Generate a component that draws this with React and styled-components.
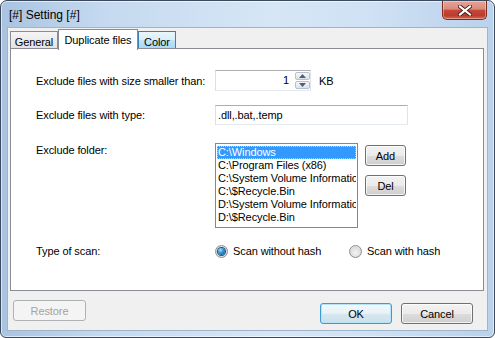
import React from "react";
import styled, { createGlobalStyle, css } from "styled-components";

const GlobalStyle = createGlobalStyle`
  html, body {
    margin: 0;
    padding: 0;
  }
  body {
    width: 495px;
    height: 338px;
    overflow: hidden;
    background: #fff;
    font-family: "Segoe UI", "Liberation Sans", Arial, sans-serif;
    font-size: 11px;
    letter-spacing: -0.1px;
    color: #000;
  }
`;

const Window = styled.div`
  box-sizing: border-box;
  width: 495px;
  height: 338px;
  display: flex;
  flex-direction: column;
  border: 1px solid #3b4a5c;
  border-radius: 7px 7px 6px 6px;
  overflow: hidden;
  background: linear-gradient(
    90deg,
    #a9c3e0 0%,
    #c4d9ef 20%,
    #d6e6f6 55%,
    #cfe1f4 75%,
    #b9d1eb 100%
  );
  box-shadow: inset 0 0 0 1px rgba(255, 255, 255, 0.6);
`;

const TitleBar = styled.div`
  height: 27px;
  display: flex;
  justify-content: space-between;
  align-items: flex-start;
  padding-left: 8px;
`;

const Title = styled.div`
  font-size: 12px;
  letter-spacing: 0;
  line-height: 15px;
  margin-top: 7px;
  color: #000;
`;

const CloseButton = styled.div`
  box-sizing: border-box;
  width: 45px;
  height: 19px;
  margin-right: 7px;
  display: flex;
  align-items: center;
  justify-content: center;
  border: 1px solid #7d2a21;
  border-top: none;
  border-radius: 0 0 5px 5px;
  background: linear-gradient(
    #e6a698 0%,
    #d8897c 45%,
    #c5483b 52%,
    #bd3a2c 80%,
    #d4684f 100%
  );
  box-shadow: inset 0 0 0 1px rgba(255, 255, 255, 0.35);
`;

const Client = styled.div`
  flex: 1;
  margin: 0 7px 7px 7px;
  padding: 1px 3px 0 2px;
  display: flex;
  flex-direction: column;
  background: #f0f0f0;
  box-shadow: 0 0 0 1px #9fb3c9;
`;

const TabBar = styled.div`
  height: 21px;
  display: flex;
  align-items: flex-end;
  position: relative;
  z-index: 1;
  margin-bottom: -2px;
`;

const Tab = styled.div`
  box-sizing: border-box;
  width: ${(p) => p.$w}px;
  height: 17px;
  margin-bottom: 2px;
  display: flex;
  justify-content: center;
  padding-top: 3px;
  line-height: 14px;
  border: 1px solid #898c95;
  border-bottom: none;
  background: linear-gradient(#f5f5f5, #e3e3e3);
  ${(p) =>
    p.$hover &&
    css`
      border-color: #3c7fb1;
      background: linear-gradient(#e9f5fc 0%, #d9eefb 50%, #bfe4f9 51%, #a9d8f5 100%);
    `}
  ${(p) =>
    p.$active &&
    css`
      height: 21px;
      margin-bottom: 0;
      padding-top: 3px;
      background: #fff;
    `}
`;

const Panel = styled.div`
  box-sizing: border-box;
  height: 243px;
  border: 1px solid #898c95;
  background: #fff;
  padding-left: 25px;
  display: flex;
  flex-direction: column;
`;

const Row = styled.div`
  display: flex;
  align-items: ${(p) => (p.$top ? "flex-start" : "center")};
  margin-top: ${(p) => p.$mt}px;
  min-height: ${(p) => p.$h || 14}px;
`;

const Label = styled.div`
  width: 179px;
  flex: none;
  line-height: 14px;
`;

const SpinBox = styled.div`
  box-sizing: border-box;
  width: 96px;
  height: 21px;
  display: flex;
  border: 1px solid #abadb3;
  border-color: #abadb3 #e2e3ea #e3e9ef #dbdfe6;
  background: #fff;
`;

const SpinValue = styled.div`
  flex: 1;
  text-align: right;
  padding-right: 6px;
  line-height: 19px;
`;

const SpinButtons = styled.div`
  width: 15px;
  display: flex;
  flex-direction: column;
  padding: 1px 0;
  gap: 1px;
`;

const SpinHalf = styled.div`
  flex: 1;
  display: flex;
  align-items: center;
  justify-content: center;
  border: 1px solid #b7c1ce;
  border-radius: 2px;
  background: linear-gradient(#f6f7f9, #dfe3e8);
`;

const Unit = styled.div`
  margin-left: 8px;
`;

const TextInput = styled.div`
  box-sizing: border-box;
  width: 193px;
  height: 20px;
  padding-left: 2px;
  line-height: 18px;
  border: 1px solid;
  border-color: #abadb3 #e2e3ea #e3e9ef #dbdfe6;
  background: #fff;
`;

const ListBox = styled.div`
  box-sizing: border-box;
  width: 143px;
  height: 85px;
  padding: 2px 1px 0 1px;
  border: 1px solid #828790;
  background: #fff;
  overflow: hidden;
`;

const ListItem = styled.div`
  box-sizing: border-box;
  height: 13px;
  line-height: 13px;
  padding-left: 1px;
  white-space: nowrap;
  overflow: hidden;
  ${(p) =>
    p.$selected &&
    css`
      background: #3399ff;
      color: #fff;
      outline: 1px dotted #a8d2ff;
      outline-offset: -1px;
    `}
`;

const SideButtons = styled.div`
  margin-left: 7px;
  padding-top: 2px;
  display: flex;
  flex-direction: column;
  gap: 9px;
`;

const Button = styled.div`
  box-sizing: border-box;
  width: ${(p) => p.$w}px;
  height: 21px;
  display: flex;
  align-items: center;
  justify-content: center;
  margin-top: ${(p) => p.$mt || 0}px;
  border: 1px solid #707070;
  border-radius: 3px;
  background: linear-gradient(#f2f2f2 0%, #ebebeb 50%, #dddddd 51%, #cfcfcf 100%);
  box-shadow: inset 0 0 0 1px rgba(255, 255, 255, 0.75);
  ${(p) =>
    p.$default &&
    css`
      border-color: #3c9bd0;
      box-shadow: inset 0 0 0 1px #b8e4f8;
      background: linear-gradient(#f3f9fc 0%, #e6f1f7 50%, #d6e7f0 51%, #cde0ea 100%);
    `}
  ${(p) =>
    p.$disabled &&
    css`
      border-color: #adb2b5;
      background: #f4f4f4;
      box-shadow: none;
      color: #a3a3a3;
    `}
`;

const RadioGroup = styled.div`
  display: flex;
  align-items: center;
  width: ${(p) => p.$w || "auto"};
`;

const Radio = styled.span`
  box-sizing: border-box;
  width: 13px;
  height: 13px;
  margin-right: 5px;
  border-radius: 50%;
  border: 1px solid #8e8f8f;
  background: radial-gradient(circle at 50% 60%, #f4f4f4 0%, #dcdcdc 60%, #f0f0f0 100%);
  display: flex;
  align-items: center;
  justify-content: center;
  &::after {
    content: "";
    display: ${(p) => (p.$checked ? "block" : "none")};
    width: 7px;
    height: 7px;
    border-radius: 50%;
    box-shadow: 0 0 0 1px #1b4f7c;
    background: radial-gradient(circle at 35% 30%, #a6e1ff 0%, #2e8fd0 45%, #0d4a85 100%);
  }
`;

const Footer = styled.div`
  display: flex;
  align-items: flex-start;
  padding: 0 11px 0 3px;
`;

const FooterRight = styled.div`
  margin-left: auto;
  display: flex;
  gap: 9px;
`;

const folders = [
  "C:\\Windows",
  "C:\\Program Files (x86)",
  "C:\\System Volume Information",
  "C:\\$Recycle.Bin",
  "D:\\System Volume Information",
  "D:\\$Recycle.Bin",
];

const Arrow = ({ up }) => (
  <svg width="7" height="4" viewBox="0 0 7 4">
    <path d={up ? "M0 4 L3.5 0 L7 4 Z" : "M0 0 L3.5 4 L7 0 Z"} fill="#4c607e" />
  </svg>
);

export default function App() {
  return (
    <>
      <GlobalStyle />
      <Window>
        <TitleBar>
          <Title>[#] Setting [#]</Title>
          <CloseButton>
            <svg width="14" height="11" viewBox="0 0 14 11">
              <path d="M2 1.5 L12 9.5 M12 1.5 L2 9.5" stroke="#4a1d18" strokeWidth="4" strokeLinecap="square" />
              <path d="M2 1.5 L12 9.5 M12 1.5 L2 9.5" stroke="#fff" strokeWidth="2.2" strokeLinecap="square" />
            </svg>
          </CloseButton>
        </TitleBar>
        <Client>
          <TabBar>
            <Tab $w={48}>General</Tab>
            <Tab $w={80} $active>
              Duplicate files
            </Tab>
            <Tab $w={38} $hover>
              Color
            </Tab>
          </TabBar>
          <Panel>
            <Row $mt={21} $h={21}>
              <Label>Exclude files with size smaller than:</Label>
              <SpinBox>
                <SpinValue>1</SpinValue>
                <SpinButtons>
                  <SpinHalf>
                    <Arrow up />
                  </SpinHalf>
                  <SpinHalf>
                    <Arrow />
                  </SpinHalf>
                </SpinButtons>
              </SpinBox>
              <Unit>KB</Unit>
            </Row>
            <Row $mt={14} $h={20}>
              <Label>Exclude files with type:</Label>
              <TextInput>.dll,.bat,.temp</TextInput>
            </Row>
            <Row $mt={18} $top>
              <Label>Exclude folder:</Label>
              <ListBox>
                {folders.map((f, i) => (
                  <ListItem key={f + i} $selected={i === 0}>
                    {f}
                  </ListItem>
                ))}
              </ListBox>
              <SideButtons>
                <Button $w={41}>Add</Button>
                <Button $w={41}>Del</Button>
              </SideButtons>
            </Row>
            <Row $mt={16}>
              <Label>Type of scan:</Label>
              <RadioGroup $w="134px">
                <Radio $checked />
                Scan without hash
              </RadioGroup>
              <RadioGroup>
                <Radio />
                Scan with hash
              </RadioGroup>
            </Row>
          </Panel>
          <Footer>
            <Button $w={73} $mt={9} $disabled>
              Restore
            </Button>
            <FooterRight>
              <Button $w={72} $mt={12} $default>
                OK
              </Button>
              <Button $w={72} $mt={12}>
                Cancel
              </Button>
            </FooterRight>
          </Footer>
        </Client>
      </Window>
    </>
  );
}
